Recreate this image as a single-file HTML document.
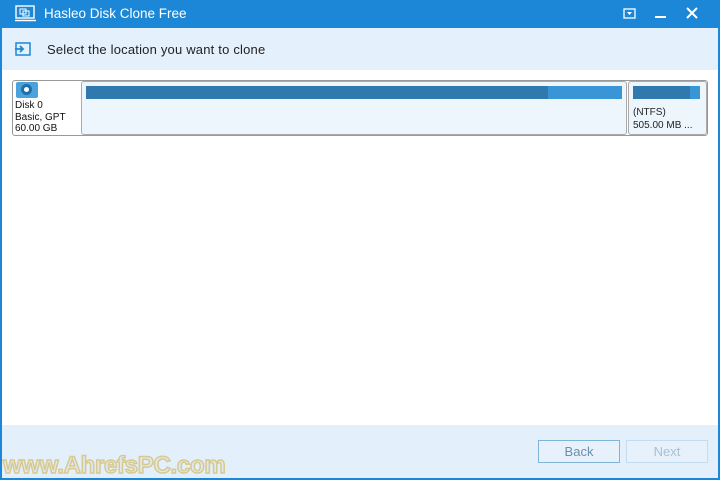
<!DOCTYPE html>
<html><head><style>
body{margin:0;width:720px;height:480px;overflow:hidden;font-family:"Liberation Sans",sans-serif;background:#fff;position:relative}
.abs{position:absolute}
</style></head><body>
<div class="abs" style="left:0;top:0;width:720px;height:480px;box-sizing:border-box;border:2px solid #1c87d6;border-top:none"></div>
<div class="abs" style="left:0;top:0;width:720px;height:28px;background:#1c87d6"></div>
<svg class="abs" style="left:15px;top:5px" width="22" height="18"><rect x="1" y="1" width="18" height="12" fill="none" stroke="#fff" stroke-width="1.4"/><rect x="5" y="4" width="6" height="5" fill="none" stroke="#fff"/><rect x="8" y="6" width="6" height="5" fill="none" stroke="#fff"/><line x1="0" y1="15.5" x2="21" y2="15.5" stroke="#fff" stroke-width="1.4"/></svg>
<div class="abs" style="left:44px;top:6px;color:#fff;font-size:13.5px">Hasleo Disk Clone Free</div>
<svg class="abs" style="left:623px;top:8px" width="14" height="12"><rect x="1" y="1" width="11" height="9" fill="none" stroke="#fff" stroke-width="1.3"/><path d="M4 4h5l-2.5 3z" fill="#fff"/></svg>
<div class="abs" style="left:655px;top:16px;width:11px;height:2px;background:#fff"></div>
<svg class="abs" style="left:686px;top:7px" width="12" height="12"><path d="M1 1L11 11M11 1L1 11" stroke="#fff" stroke-width="2"/></svg>
<div class="abs" style="left:2px;top:28px;width:716px;height:42px;background:#e4f0fb"></div>
<svg class="abs" style="left:15px;top:42px" width="16" height="14"><rect x="1" y="1" width="14" height="12" fill="none" stroke="#1c87d6" stroke-width="1.5"/><path d="M0 7h8M5 4l3 3-3 3" stroke="#1c87d6" stroke-width="1.8" fill="none"/></svg>
<div class="abs" style="left:47px;top:42px;font-size:13px;color:#222;letter-spacing:0.2px">Select the location you want to clone</div>
<div class="abs" style="left:12px;top:80px;width:696px;height:56px;box-sizing:border-box;border:1px solid #999;border-radius:3px;background:#fff"></div>
<div class="abs" style="left:16px;top:82px;width:22px;height:16px;background:#4aa3dd;border-radius:2px"></div>
<div class="abs" style="left:21px;top:84px;width:11px;height:11px;border:3px solid #1f6fa8;background:#fff;border-radius:50%;box-sizing:border-box"></div>
<div class="abs" style="left:15px;top:100px;font-size:10px;line-height:11.5px;color:#111">Disk 0<br>Basic, GPT<br>60.00 GB</div>
<div class="abs" style="left:81px;top:81px;width:546px;height:54px;box-sizing:border-box;border:1px solid #aaa;border-radius:3px;background:#eef6fd"></div>
<div class="abs" style="left:86px;top:86px;width:462px;height:13px;background:#2f79ae"></div>
<div class="abs" style="left:548px;top:86px;width:74px;height:13px;background:#3a95d6"></div>
<div class="abs" style="left:628px;top:81px;width:79px;height:54px;box-sizing:border-box;border:1px solid #aaa;border-radius:3px;background:#eef6fd"></div>
<div class="abs" style="left:633px;top:86px;width:57px;height:13px;background:#2f79ae"></div>
<div class="abs" style="left:690px;top:86px;width:10px;height:13px;background:#3a95d6"></div>
<div class="abs" style="left:633px;top:106px;font-size:10px;line-height:13px;color:#222">(NTFS)<br>505.00 MB ...</div>
<div class="abs" style="left:2px;top:425px;width:716px;height:53px;background:#e3effb"></div>
<div class="abs" style="left:538px;top:440px;width:82px;height:23px;box-sizing:border-box;border:1px solid #7fb4d8;background:#e6f1fb;color:#6a90ab;font-size:13px;text-align:center;line-height:22px">Back</div>
<div class="abs" style="left:626px;top:440px;width:82px;height:23px;box-sizing:border-box;border:1px solid #c5dcee;background:#e6f1fb;color:#a9c0d2;font-size:13px;text-align:center;line-height:22px">Next</div>
<div class="abs" style="left:3px;top:452px;font-size:24px;font-weight:bold;color:#dfe8f0;-webkit-text-stroke:1.5px #d8c98c;letter-spacing:-0.3px">www.AhrefsPC.com</div>
</body></html>
